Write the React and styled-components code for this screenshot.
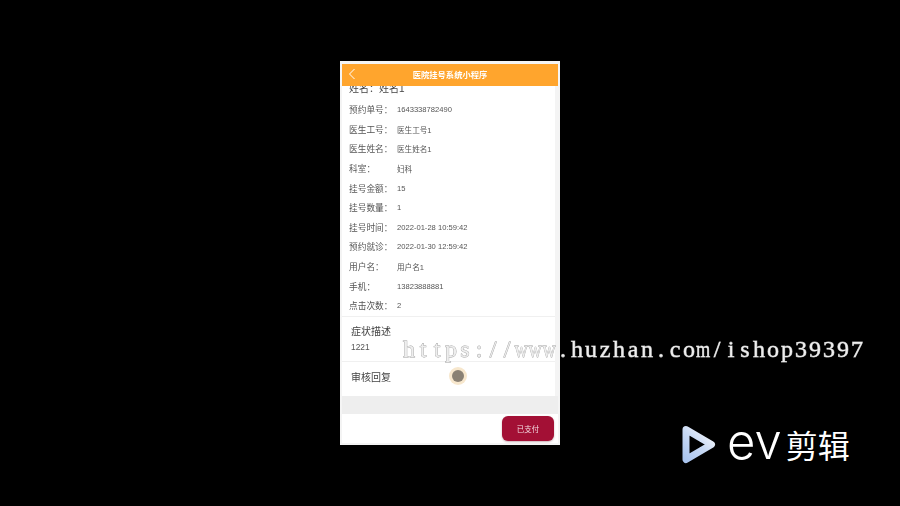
import React from 'react';
import styled, { createGlobalStyle } from 'styled-components';

const rows = [
  ['预约单号：', '1643338782490'],
  ['医生工号：', '医生工号1'],
  ['医生姓名：', '医生姓名1'],
  ['科室：', '妇科'],
  ['挂号金额：', '15'],
  ['挂号数量：', '1'],
  ['挂号时间：', '2022-01-28 10:59:42'],
  ['预约就诊：', '2022-01-30 12:59:42'],
  ['用户名：', '用户名1'],
  ['手机：', '13823888881'],
  ['点击次数：', '2'],
];

const WATERMARK = 'https://www.huzhan.com/ishop39397';

export default function App() {
  return (
    <>
      <GlobalStyle />
      <Stage>
        <Phone>
          <Header>
            <BackIcon viewBox="0 0 8 12">
              <path d="M6.5 1 L1.5 6 L6.5 11" />
            </BackIcon>
            <HeaderTitle>医院挂号系统小程序</HeaderTitle>
          </Header>
          <Content>
            <NameRow>姓名：姓名1</NameRow>
            {rows.map(([label, value]) => (
              <Row key={label}>
                <Label>{label}</Label>
                <Value>{value}</Value>
              </Row>
            ))}
            <Block>
              <BlockTitle>症状描述</BlockTitle>
              <BlockText>1221</BlockText>
            </Block>
            <ReplyBlock>
              <BlockTitle>审核回复</BlockTitle>
            </ReplyBlock>
          </Content>
          <Spacer />
          <Footer>
            <PayButton>已支付</PayButton>
          </Footer>
        </Phone>
        <TouchDot />
        <Watermark>
          {WATERMARK.split('').map((ch, i) => (
            <WatermarkChar key={i} $wide={ch === 'w' || ch === 'm'}>{ch}</WatermarkChar>
          ))}
        </Watermark>
        <Logo>
          <svg width="34" height="39" viewBox="0 0 34 39">
            <defs>
              <linearGradient id="play" gradientUnits="userSpaceOnUse" x1="2" y1="34" x2="28" y2="6">
                <stop offset="0" stopColor="#a9c4ee" />
                <stop offset="0.55" stopColor="#c9daf5" />
                <stop offset="1" stopColor="#f6f7fb" />
              </linearGradient>
            </defs>
            <path d="M4 4.5 L29.5 19.5 L4 34.5 Z" fill="none" stroke="url(#play)" strokeWidth="7" strokeLinejoin="round" />
          </svg>
          <LogoLatin>ev</LogoLatin>
          <LogoCjk>剪辑</LogoCjk>
        </Logo>
      </Stage>
    </>
  );
}

const GlobalStyle = createGlobalStyle`
  html, body {
    margin: 0;
    padding: 0;
    background: #000;
  }
`;

const Stage = styled.div`
  position: relative;
  width: 900px;
  height: 506px;
  overflow: hidden;
  background: #000;
  padding: 61px 0 0 340px;
  box-sizing: border-box;
  font-family: "Liberation Sans", "Noto Sans CJK SC", sans-serif;
`;

const Phone = styled.div`
  width: 220px;
  height: 384px;
  box-sizing: border-box;
  padding: 3px 2px 2px;
  background: #f4f4f4;
  display: flex;
  flex-direction: column;
  filter: blur(0.35px);
`;

const Header = styled.div`
  height: 22px;
  flex-shrink: 0;
  box-sizing: border-box;
  padding-bottom: 3px;
  background: #ffa52d;
  display: flex;
  align-items: center;
  justify-content: center;
  position: relative;
  z-index: 1;
`;

const BackIcon = styled.svg`
  position: absolute;
  left: 6px;
  top: 4px;
  width: 8px;
  height: 12px;
  fill: none;
  stroke: #fff;
  stroke-width: 1;
`;

const HeaderTitle = styled.span`
  color: #fff;
  font-size: 8.3px;
  font-weight: 700;
`;

const Content = styled.div`
  height: 310px;
  flex-shrink: 0;
  overflow: hidden;
  background: #fff;
  margin-right: 3px;
`;

const NameRow = styled.div`
  height: 21px;
  line-height: 19px;
  margin-top: -7px;
  padding-left: 7px;
  font-size: 10px;
  color: #444;
`;

const Row = styled.div`
  height: 19.6px;
  display: flex;
  align-items: center;
  padding-left: 7px;
`;

const Label = styled.span`
  width: 48px;
  flex-shrink: 0;
  font-size: 8.7px;
  color: #555;
`;

const Value = styled.span`
  font-size: 7.6px;
  color: #555;
`;

const Block = styled.div`
  height: 46px;
  box-sizing: border-box;
  padding: 8px 0 0 9px;
  border-top: 1px solid #f0f0f0;
  border-bottom: 1px solid #f0f0f0;
`;

const ReplyBlock = styled(Block)`
  border: none;
  padding-top: 9px;
`;

const BlockTitle = styled.div`
  font-size: 10px;
  line-height: 14px;
  color: #444;
`;

const BlockText = styled.div`
  font-size: 8.4px;
  line-height: 12px;
  margin-top: 2px;
  color: #555;
`;

const Spacer = styled.div`
  flex: 0 0 18px;
  background: #eeeeee;
`;

const Footer = styled.div`
  flex: 1;
  background: #fff;
  display: flex;
  justify-content: flex-end;
  align-items: flex-start;
  padding: 2px 4px 0 0;
`;

const PayButton = styled.button`
  width: 52px;
  height: 25px;
  border: none;
  border-radius: 6px;
  background: #a31035;
  box-shadow: 0 1px 2px rgba(120, 60, 70, 0.4);
  color: #f3d9df;
  font-family: inherit;
  font-size: 7.5px;
  padding: 0;
`;

const TouchDot = styled.div`
  position: absolute;
  left: 452px;
  top: 370px;
  width: 12px;
  height: 12px;
  border-radius: 50%;
  background: #8a8174;
  box-shadow: 0 0 0 3px #f7e7cd;
  filter: blur(0.6px);
`;

const Watermark = styled.div`
  position: absolute;
  left: 402px;
  top: 336px;
  display: flex;
  font-family: "Liberation Serif", serif;
  font-size: 24px;
  line-height: 27px;
  white-space: nowrap;
  color: #eeeeee;
  -webkit-text-stroke: 0.8px #a0a0a0;
  paint-order: stroke fill;
  filter: grayscale(1);
`;

const WatermarkChar = styled.span`
  flex: 0 0 14px;
  width: 14px;
  min-width: 0;
  display: flex;
  justify-content: center;
  transform: ${(props) => (props.$wide ? 'scaleX(0.76)' : 'none')};
`;

const Logo = styled.div`
  position: absolute;
  left: 682px;
  top: 425px;
  display: flex;
  align-items: center;
  color: #fff;
`;

const LogoLatin = styled.span`
  font-family: Inter, sans-serif;
  font-size: 49px;
  font-weight: 300;
  line-height: 39px;
  margin-left: 11px;
  position: relative;
  top: -3px;
`;

const LogoCjk = styled.span`
  font-family: "Noto Sans CJK SC", sans-serif;
  font-size: 32px;
  font-weight: 400;
  line-height: 39px;
  margin-left: 4px;
`;
